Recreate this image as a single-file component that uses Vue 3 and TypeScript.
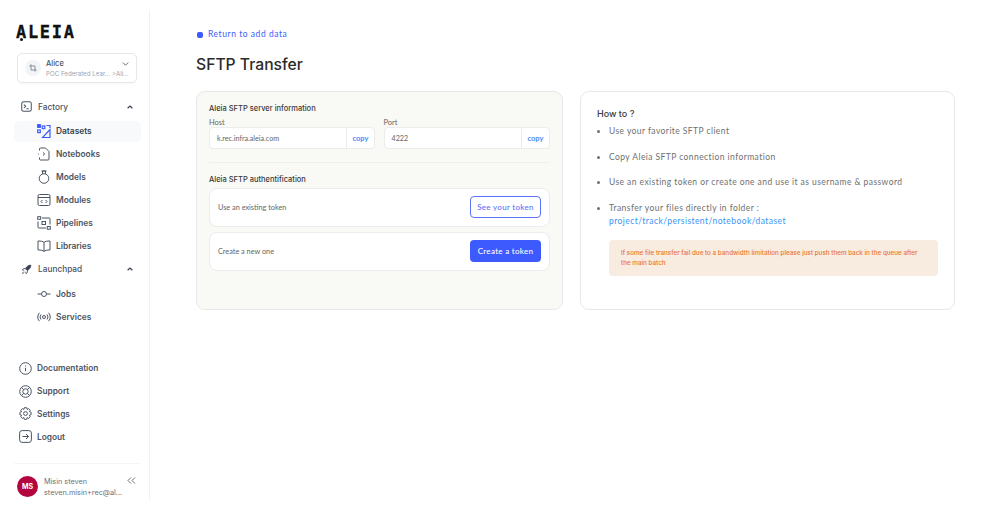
<script setup lang="ts">
const howTo = [
  'Use your favorite SFTP client',
  'Copy Aleia SFTP connection information',
  'Use an existing token or create one and use it as username & password',
]
</script>

<template>
  <div class="page">
    <aside class="side">
      <div class="logo">ALEIA</div>
      <div class="project">
        <span class="pico">
          <svg width="8" height="8" viewBox="0 0 10 10" fill="none" stroke="#7b8494" stroke-width="1.1"><path d="M2.500 0.500v7h7M0.500 2.500h7v7"/></svg>
        </span>
        <div class="ptext">
          <div class="pname">Alice</div>
          <div class="psub">POC Federated Lear... &gt;Ali...</div>
        </div>
        <svg class="pchev" width="7" height="4" viewBox="0 0 8 5" fill="none" stroke="#4b5563" stroke-width="1.1"><path d="M.7.700 4 4l3.300-3.300"/></svg>
      </div>

      <nav class="nav">
        <div class="group">
          <svg width="11" height="11" viewBox="0 0 15 15" fill="none" stroke="#4b5563" stroke-width="1.400"><rect x="1" y="1" width="13" height="13" rx="2.500"/><path d="m4 5 2.400 2.200L4 9.400M7.500 10.500h3"/></svg>
          <span>Factory</span>
          <svg class="gchev" width="6" height="4" viewBox="0 0 6 4" fill="none" stroke="#374151" stroke-width="1.200"><path d="M.6 3.300 3 1l2.400 2.300"/></svg>
        </div>
        <div class="item active">
          <svg width="14" height="14" viewBox="0 0 14 14" fill="none" stroke="#3d5afe" stroke-width="1.200"><rect x=".7" y=".7" width="2.600" height="2.600" fill="#3d5afe"/><rect x="5.200" y="2" width="2.600" height="2.600"/><rect x=".7" y="6" width="2.600" height="2.600"/><path d="M13 5.500v8H5.500z"/><path d="M9.500 1.500H13V4"/></svg>
          <span>Datasets</span>
        </div>
        <div class="item">
          <svg width="14" height="14" viewBox="0 0 14 14" fill="none" stroke="#4b5563" stroke-width="1"><path d="M2.500 3.500V2a1 1 0 0 1 1-1h5L12 4.500V12a1 1 0 0 1-1 1H3.500a1 1 0 0 1-1-1v-1.500M1 7h.8"/><path d="m6 5.500 1.700 1.500L6 8.500"/></svg>
          <span>Notebooks</span>
        </div>
        <div class="item">
          <svg width="14" height="14" viewBox="0 0 14 14" fill="none" stroke="#4b5563" stroke-width="1"><circle cx="7" cy="8.500" r="4.800"/><path d="M5.500 4V1h3v3M4.500 1h5"/></svg>
          <span>Models</span>
        </div>
        <div class="item">
          <svg width="14" height="14" viewBox="0 0 14 14" fill="none" stroke="#4b5563" stroke-width="1"><rect x="1" y="1.500" width="12" height="11" rx="1.500"/><path d="M1 4.500h12M5.500 7 4 8.500 5.500 10M8.500 7 10 8.500 8.500 10"/></svg>
          <span>Modules</span>
        </div>
        <div class="item">
          <svg width="14" height="14" viewBox="0 0 14 14" fill="none" stroke="#4b5563" stroke-width="1"><rect x=".7" y=".7" width="3" height="2.600"/><rect x="5" y="5.500" width="3.500" height="3"/><rect x="10.300" y="10.500" width="3" height="2.700"/><path d="M5 2h7a1 1 0 0 1 1 1v5.500M9 12H2a1 1 0 0 1-1-1V5.500"/></svg>
          <span>Pipelines</span>
        </div>
        <div class="item">
          <svg width="14" height="14" viewBox="0 0 14 14" fill="none" stroke="#4b5563" stroke-width="1"><path d="M7 3.500C6 2.300 4 2 1 2v9c3 0 5 .3 6 1.500 1-1.200 3-1.500 6-1.500V2c-3 0-5 .3-6 1.500zM7 3.500v9"/></svg>
          <span>Libraries</span>
        </div>
        <div class="group g2">
          <svg width="11" height="11" viewBox="0 0 15 15" fill="#374151" stroke="#374151" stroke-width="1"><path d="M13.500 1.500c-3.500.3-6 2-7.500 5L8.500 9c3-1.500 4.700-4 5-7.500z"/><path d="M5.500 6 3 6.500 1.800 8.200l2.700.3M9 9.500 8.500 12l-1.700 1.200-.3-2.700M3.500 10.500c-1 .7-1.300 1.700-1.300 2.300.7 0 1.700-.3 2.300-1.300" fill="none"/></svg>
          <span>Launchpad</span>
          <svg class="gchev" width="6" height="4" viewBox="0 0 6 4" fill="none" stroke="#374151" stroke-width="1.200"><path d="M.6 3.300 3 1l2.400 2.300"/></svg>
        </div>
        <div class="item">
          <svg width="14" height="14" viewBox="0 0 14 14" fill="none" stroke="#4b5563" stroke-width="1"><circle cx="7" cy="7" r="2.500"/><path d="M.5 7h4M9.500 7h4"/></svg>
          <span>Jobs</span>
        </div>
        <div class="item">
          <svg width="14" height="14" viewBox="0 0 14 14" fill="none" stroke="#4b5563" stroke-width="1"><circle cx="7" cy="7" r="1.500"/><path d="M4 4.500a4 4 0 0 0 0 5M10 4.500a4 4 0 0 1 0 5M2.300 2.800a7 7 0 0 0 0 8.400M11.700 2.800a7 7 0 0 1 0 8.400"/></svg>
          <span>Services</span>
        </div>
      </nav>

      <div class="bottom">
        <div class="bitem">
          <svg width="13" height="13" viewBox="0 0 13 13" fill="none" stroke="#4b5563" stroke-width="1"><circle cx="6.500" cy="6.500" r="5.800"/><path d="M6.500 5.800v3.400M6.500 3.500v1"/></svg>
          <span>Documentation</span>
        </div>
        <div class="bitem">
          <svg width="13" height="13" viewBox="0 0 13 13" fill="none" stroke="#4b5563" stroke-width="1"><circle cx="6.500" cy="6.500" r="5.800"/><circle cx="6.500" cy="6.500" r="2.700"/><path d="m2.400 2.400 2.200 2.200M10.600 2.400 8.400 4.600M2.400 10.600l2.200-2.200M10.600 10.600 8.400 8.400"/></svg>
          <span>Support</span>
        </div>
        <div class="bitem">
          <svg width="13" height="13" viewBox="0 0 13 13" fill="none" stroke="#4b5563" stroke-width="1"><circle cx="6.500" cy="6.500" r="1.900"/><path d="M5.300.7h2.400l.4 1.700 1.500-.8 1.600 1.700-.8 1.400 1.700.6v2.400l-1.700.5.800 1.500-1.600 1.700-1.500-.8-.4 1.700H5.300l-.4-1.700-1.500.8-1.600-1.700.8-1.500-1.700-.5V5.300l1.700-.6-.8-1.400 1.600-1.700 1.500.8z"/></svg>
          <span>Settings</span>
        </div>
        <div class="bitem">
          <svg width="13" height="13" viewBox="0 0 13 13" fill="none" stroke="#4b5563" stroke-width="1"><rect x=".6" y=".6" width="11.800" height="11.800" rx="2.500"/><path d="M3.500 6.500h6M7 4l2.500 2.500L7 9"/></svg>
          <span>Logout</span>
        </div>
      </div>

      <div class="user">
        <div class="avatar">MS</div>
        <div class="utext">
          <div>Misin steven</div>
          <div>steven.misin+rec@al...</div>
        </div>
        <svg class="collapse" width="9" height="7" viewBox="0 0 9 7" fill="none" stroke="#6b7280" stroke-width="1"><path d="M4 .5 1 3.500 4 6.500M8 .5 5 3.500 8 6.500"/></svg>
      </div>
    </aside>

    <main class="main">
      <a class="back">
        <span class="backico"></span>
        <span>Return to add data</span>
      </a>
      <h1 class="title">SFTP Transfer</h1>
      <div class="cards">
        <section class="card left">
          <h3 class="h">Aleia SFTP server information</h3>
          <div class="fields">
            <div class="field host">
              <label>Host</label>
              <div class="input"><span class="val">k.rec.infra.aleia.com</span><span class="copy">copy</span></div>
            </div>
            <div class="field port">
              <label>Port</label>
              <div class="input"><span class="val">4222</span><span class="copy">copy</span></div>
            </div>
          </div>
          <hr class="sep" />
          <h3 class="h auth">Aleia SFTP authentification</h3>
          <div class="row">
            <span>Use an existing token</span>
            <button class="btn outline">See your token</button>
          </div>
          <div class="row">
            <span>Create a new one</span>
            <button class="btn solid">Create a token</button>
          </div>
        </section>

        <section class="card right">
          <h2 class="howto">How to ?</h2>
          <ul class="list">
            <li v-for="t in howTo" :key="t">{{ t }}</li>
            <li>Transfer your files directly in folder :<br /><span class="link">project/track/persistent/notebook/dataset</span></li>
          </ul>
          <div class="warn">If some file transfer fail due to a bandwidth limitation please just push them back in the queue after the main batch</div>
        </section>
      </div>
    </main>
  </div>
</template>

<style>
html, body { margin: 0; background: #fff; }
</style>

<style scoped>
.page {
  width: 999px;
  height: 510px;
  display: flex;
  overflow: hidden;
  font-family: Inter, "Liberation Sans", sans-serif;
  color: #374151;
}
.side {
  width: 150px;
  height: 490px;
  margin-top: 10px;
  box-sizing: border-box;
  border-right: 1px solid #f1f2f4;
  padding: 0 8px 0 14px;
  display: flex;
  flex-direction: column;
  flex-shrink: 0;
}
.logo {
  position: relative;
  font-family: "DejaVu Sans Mono", monospace;
  font-weight: 700;
  font-size: 17px;
  line-height: 20px;
  letter-spacing: 1.700px;
  color: #111;
  -webkit-text-stroke: .3px #111;
  margin: 12px 0 0 2px;
}
.logo::after {
  content: "";
  position: absolute;
  left: 4px;
  top: 16px;
  width: 3px;
  height: 3px;
  background: #111;
  border-radius: 50%;
}
.project {
  margin: 11px 4px 0 3px;
  height: 30px;
  box-sizing: border-box;
  border: 1px solid #e5e7eb;
  border-radius: 5px;
  display: flex;
  align-items: center;
  padding: 0 6px 0 7px;
  position: relative;
  box-shadow: 0 1px 2px rgba(0,0,0,.04);
}
.pico {
  width: 16px;
  height: 16px;
  border-radius: 50%;
  background: #f3f4f6;
  display: flex;
  align-items: center;
  justify-content: center;
  margin-right: 5px;
  flex-shrink: 0;
}
.pname { font-size: 7.500px; font-weight: 500; line-height: 10px; color: #4b5563; }
.psub { font-size: 6.200px; line-height: 9px; color: #9ca3af; white-space: nowrap; }
.pchev { position: absolute; right: 7px; top: 8px; }
.nav { margin-top: 12px; }
.group {
  height: 23px;
  display: flex;
  align-items: center;
  gap: 6px;
  padding-left: 7px;
  margin-bottom: 2.500px;
  font-size: 8.300px;
  font-weight: 500;
  color: #4b5563;
}
.g2 { margin-top: 1px; margin-bottom: 2px; }
.gchev { margin-left: auto; margin-right: 8px; }
.item {
  height: 22.800px;
  display: flex;
  align-items: center;
  gap: 5px;
  padding-left: 23px;
  font-size: 8.400px;
  font-weight: 600;
  color: #4b5563;
}
.item svg { flex-shrink: 0; }
.active {
  background: #f8f9fa;
  border-radius: 5px;
  height: 21px;
  margin: 1px 0 1.500px;
  color: #374151;
}
.bottom { margin-top: auto; }
.bitem {
  height: 22.800px;
  display: flex;
  align-items: center;
  gap: 5px;
  padding-left: 5px;
  font-size: 8.300px;
  font-weight: 600;
  color: #4b5563;
}
.user {
  margin-top: 14.500px;
  border-top: 1px solid #f5f6f7;
  height: 37.500px;
  display: flex;
  align-items: flex-start;
  padding: 12px 0 0 3px;
  position: relative;
  box-sizing: border-box;
}
.avatar {
  width: 21px;
  height: 21px;
  border-radius: 50%;
  background: #b3063f;
  color: #fff;
  font-size: 7px;
  font-weight: 700;
  display: flex;
  align-items: center;
  justify-content: center;
  margin-right: 6px;
  flex-shrink: 0;
}
.utext { font-size: 7.300px; line-height: 11px; color: #6b7280; white-space: nowrap; }
.collapse { position: absolute; right: 5px; top: 13px; }
.main {
  flex: 1;
  min-width: 0;
  padding: 29px 0 0 46px;
  font-family: Lato, "Open Sans", sans-serif;
}
.back {
  display: flex;
  align-items: center;
  gap: 5px;
  font-size: 8.500px;
  letter-spacing: .55px;
  color: #3d5afe;
  line-height: 11px;
}
.backico {
  width: 6px;
  height: 6px;
  background: #3d5afe;
  border-radius: 2px;
  margin-left: 1px;
}
.title {
  margin: 13px 0 0;
  font-family: Inter, sans-serif;
  font-size: 15.700px;
  line-height: 24px;
  font-weight: 500;
  color: #2b2b2b;
}
.cards {
  display: flex;
  gap: 17px;
  margin-top: 14px;
}
.card {
  height: 219px;
  box-sizing: border-box;
  border-radius: 9px;
  border: 1px solid #e8e8e6;
}
.left {
  width: 367px;
  background: #f9f9f5;
  padding: 12px 12px 0 12px;
}
.right {
  width: 375px;
  background: #fff;
  padding: 16px 16px 0 16px;
}
.h {
  margin: 0;
  font-family: Inter, sans-serif;
  font-size: 7.500px;
  line-height: 10px;
  font-weight: 500;
  color: #3a3a3a;
}
.fields { display: flex; gap: 8.500px; margin-top: 4px; }
.field label { display: block; font-size: 7.500px; line-height: 9px; color: #666; }
.host { width: 166px; }
.port { width: 166.500px; }
.input {
  height: 22px;
  box-sizing: border-box;
  background: #fff;
  border: 1px solid #ececec;
  border-radius: 4px;
  display: flex;
  align-items: center;
  font-size: 7.200px;
  color: #666;
}
.val { flex: 1; padding-left: 7px; }
.copy {
  width: 27px;
  height: 100%;
  border-left: 1px solid #ececec;
  display: flex;
  align-items: center;
  justify-content: center;
  color: #4b8bf5;
  font-weight: 700;
  font-size: 7.500px;
}
.sep { border: 0; border-top: 1px solid #efefeb; margin: 13px 0 0; }
.auth { margin-top: 12px; }
.row {
  height: 39px;
  margin-top: 2.500px;
  box-sizing: border-box;
  background: #fff;
  border: 1px solid #ececec;
  border-radius: 8px;
  display: flex;
  align-items: center;
  justify-content: space-between;
  padding: 0 8px 0 8px;
  font-size: 7.300px;
  color: #666;
}
.row + .row { margin-top: 5px; }
.btn {
  width: 71px;
  height: 22px;
  box-sizing: border-box;
  border-radius: 4px;
  font-family: Lato, sans-serif;
  font-size: 8px;
  font-weight: 500;
  letter-spacing: .3px;
  padding: 0;
}
.outline { background: #fff; border: 1.500px solid #5c72fb; color: #5c72fb; }
.solid { background: #3d5afe; border: 0; color: #fff; }
.howto {
  margin: 0;
  font-family: Inter, sans-serif;
  font-size: 9px;
  line-height: 12px;
  font-weight: 500;
  color: #3a3a3a;
}
.list {
  margin: 5px 0 0;
  padding: 0 0 0 12px;
  list-style: disc;
  font-size: 8.500px;
  letter-spacing: .43px;
  line-height: 13px;
  color: #6f6f6f;
}
.list li { margin-bottom: 12.700px; }
.list li:last-child { margin-bottom: 0; }
.link { color: #3b93f6; }
.warn {
  margin: 12px 0 0 12px;
  height: 36px;
  box-sizing: border-box;
  background: #f8ebe0;
  border-radius: 4px;
  padding: 8px 12px 0 12px;
  font-family: Inter, sans-serif;
  font-size: 6.300px;
  font-weight: 500;
  line-height: 10px;
  color: #e8762d;
}
</style>
